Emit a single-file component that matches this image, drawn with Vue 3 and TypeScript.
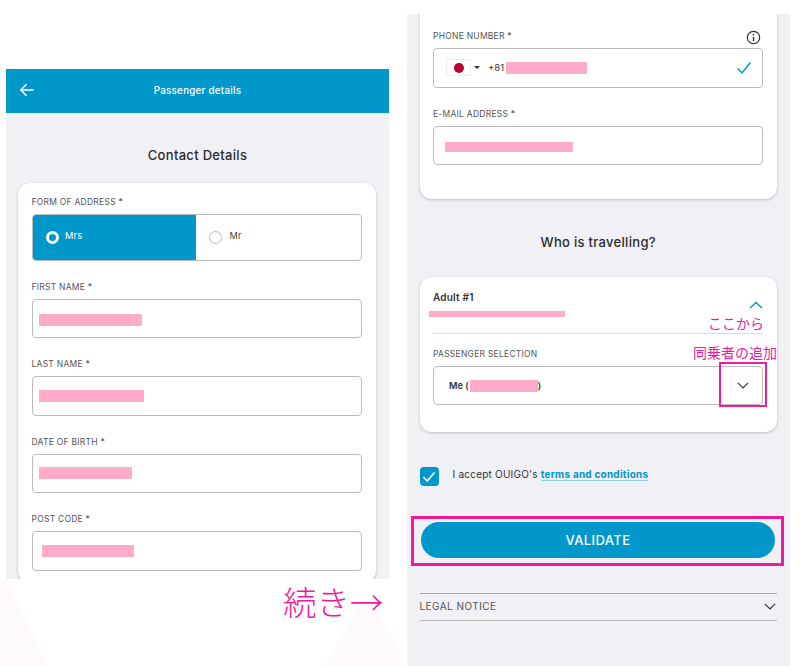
<script setup lang="ts">
const contactFields = [
  { label: 'FIRST NAME *', width: 103, inset: 6.5, shift: 3 },
  { label: 'LAST NAME *', width: 105, inset: 6.5, shift: 0 },
  { label: 'DATE OF BIRTH *', width: 92.5, inset: 6.5, shift: 0 },
  { label: 'POST CODE *', width: 92, inset: 9.5, shift: 1 },
]
</script>

<template>
  <div class="page">
    <svg class="decor" width="800" height="666" viewBox="0 0 800 666">
      <path d="M0 579L6 579L48 666L0 666Z" fill="#fefafb" />
      <path d="M325 666L362 600L372 600L400 652L400 666Z" fill="#fefafb" />
    </svg>

    <section class="panel left">
      <header class="topbar">
        <svg class="back" width="16" height="14" viewBox="0 0 16 14">
          <path d="M14.5 7H2M7.5 1.2L1.8 7L7.5 12.8" fill="none" stroke="#fff" stroke-width="1.5" />
        </svg>
        <span>Passenger details</span>
      </header>
      <h2 class="title contact">Contact Details</h2>
      <div class="card open">
        <div class="label">FORM OF ADDRESS *</div>
        <div class="radio-group">
          <div class="radio selected"><i class="dot on"></i><span>Mrs</span></div>
          <div class="radio"><i class="dot"></i><span>Mr</span></div>
        </div>
        <div v-for="f in contactFields" :key="f.label" class="field">
          <div class="label">{{ f.label }}</div>
          <div class="box" :style="{ paddingLeft: f.inset + 'px' }">
            <i class="mask" :style="{ width: f.width + 'px', marginTop: f.shift + 'px' }"></i>
          </div>
        </div>
      </div>
    </section>

    <section class="panel right">
      <div class="card tail">
        <div class="label-row">
          <div class="label">PHONE NUMBER *</div>
          <svg class="info" width="15" height="15" viewBox="0 0 15 15">
            <circle cx="7.5" cy="7.5" r="6.2" fill="none" stroke="#333" stroke-width="1.2" />
            <path d="M7.5 6.8V11" stroke="#333" stroke-width="1.4" />
            <circle cx="7.5" cy="4.6" r="0.9" fill="#333" />
          </svg>
        </div>
        <div class="box phone">
          <span class="flag"><i></i></span>
          <i class="caret"></i>
          <span class="code">+81</span>
          <i class="mask phone-mask"></i>
          <svg class="tick" width="16" height="14" viewBox="0 0 16 14">
            <path d="M1.5 7.5L6 12L14.5 1.5" fill="none" stroke="#0097cb" stroke-width="1.5" />
          </svg>
        </div>
        <div class="field">
          <div class="label">E-MAIL ADDRESS *</div>
          <div class="box email"><i class="mask email-mask"></i></div>
        </div>
      </div>

      <h2 class="title who">Who is travelling?</h2>

      <div class="card adult">
        <div class="adult-head">
          <strong>Adult #1</strong>
          <i class="mask adult-mask"></i>
          <svg class="chev-up" width="14" height="8" viewBox="0 0 14 8">
            <path d="M1 7L7 1.5L13 7" fill="none" stroke="#0097cb" stroke-width="1.5" />
          </svg>
        </div>
        <div class="label selection">PASSENGER SELECTION</div>
        <div class="box select">
          <span class="me">Me (</span><i class="mask me-mask"></i><span class="me">)</span>
          <svg class="chev" width="12" height="7" viewBox="0 0 14 8">
            <path d="M1 1L7 6.8L13 1" fill="none" stroke="#333" stroke-width="1.4" />
          </svg>
        </div>
      </div>

      <div class="accept">
        <span class="check">
          <svg width="14" height="12" viewBox="0 0 14 12">
            <path d="M1.5 6L5.2 10L12.5 1.5" fill="none" stroke="#fff" stroke-width="1.6" />
          </svg>
        </span>
        <p>I accept OUIGO's <a>terms and conditions</a></p>
      </div>

      <button class="validate">VALIDATE</button>

      <div class="legal">
        <span>LEGAL NOTICE</span>
        <svg width="12" height="7" viewBox="0 0 14 8">
          <path d="M1 1L7 6.8L13 1" fill="none" stroke="#333" stroke-width="1.4" />
        </svg>
      </div>
    </section>

    <div class="note more">続き→</div>
    <div class="note here">ここから</div>
    <div class="note add">同乗者の追加</div>
    <i class="frame frame-select"></i>
    <i class="frame frame-validate"></i>
  </div>
</template>

<style>
html, body { margin: 0; background: #fff; }
</style>

<style scoped>
.page {
  position: relative;
  width: 800px;
  height: 666px;
  overflow: hidden;
  display: flex;
  align-items: flex-start;
  background: #fff;
  font-family: Inter, "Liberation Sans", sans-serif;
  color: #333;
}
.decor { position: absolute; left: 0; top: 0; }
.panel {
  position: relative;
  width: 383px;
  background: #f0f0f5;
  overflow: hidden;
  box-sizing: border-box;
}
.left { margin: 69px 0 0 6px; height: 510px; }
.right { margin: 14px 0 0 18px; height: 652px; padding: 0 13px 0 12.5px; }
.topbar {
  position: relative;
  height: 44px;
  background: #0097cb;
  color: #fff;
  display: flex;
  align-items: center;
  justify-content: center;
  font-size: 9.8px;
  font-weight: 500;
  letter-spacing: .25px;
}
.topbar span { margin-top: -2px; }
.back { position: absolute; left: 13px; top: 14px; }
.title {
  margin: 0;
  text-align: center;
  font-size: 13px;
  line-height: 16px;
  font-weight: 500;
  letter-spacing: .3px;
  color: #2c2c2c;
}
.contact { padding: 34px 0 20px; }
.card {
  background: #fff;
  border-radius: 12px;
  box-shadow: 0 1px 3px rgba(0, 0, 0, .22);
  box-sizing: border-box;
}
.open {
  margin: 0 13px 0 12px;
  height: 400px;
  padding: 13px 14.5px 0 13.5px;
}
.label {
  font-size: 8.5px;
  line-height: 12px;
  letter-spacing: .25px;
  color: #555;
}
.radio-group {
  display: flex;
  height: 46.5px;
  margin-top: 6px;
  border-radius: 4px;
  border: 1px solid #bbb;
  box-sizing: border-box;
  overflow: hidden;
}
.radio {
  flex: 1;
  display: flex;
  align-items: center;
  gap: 8px;
  padding: 0 0 0 13px;
  box-sizing: border-box;
  font-size: 9.2px;
  color: #444;
  letter-spacing: .2px;
}
.radio span { margin-top: -3px; }
.radio.selected {
  flex: 0 0 163px;
  gap: 6.5px;
  background: #0097cb;
  color: #fff;
  padding-left: 13px;
}
.dot {
  width: 13px;
  height: 13px;
  border-radius: 50%;
  border: 1px solid #bbb;
  box-sizing: border-box;
  background: #fff;
  flex: none;
}
.dot.on { border: 3px solid #fff; background: #0097cb; }
.field { margin-top: 20px; }
.box {
  height: 39.5px;
  margin-top: 6px;
  border: 1px solid #bbb;
  border-radius: 4px;
  box-sizing: border-box;
  display: flex;
  align-items: center;
  background: #fff;
}
.mask { display: block; height: 12px; background: #ffabc9; flex: none; }
.tail {
  height: 197px;
  margin-top: -12px;
  padding: 28px 14px 0 13.5px;
}
.label-row {
  display: flex;
  justify-content: space-between;
  align-items: center;
  height: 12px;
}
.info { margin: 2px 2px 0 0; }
.phone { padding: 0 10px 0 12px; position: relative; }
.flag {
  width: 25px;
  height: 17px;
  border: 1px solid #ececec;
  border-radius: 2px;
  box-sizing: border-box;
  display: flex;
  align-items: center;
  justify-content: center;
}
.flag i { width: 10px; height: 10px; border-radius: 50%; background: #bc002d; }
.caret {
  margin-left: 2.5px;
  border-left: 3px solid transparent;
  border-right: 3px solid transparent;
  border-top: 3.5px solid #333;
}
.code { margin-left: 8.5px; font-size: 9.5px; color: #333; }
.phone-mask { width: 81px; margin-left: 2px; }
.tick { margin-left: auto; }
.email { padding-left: 11px; }
.email-mask { width: 128px; height: 10px; margin-top: 3px; }
.who { padding: 35px 0 27px; }
.adult {
  height: 155px;
  padding: 0 14px 0 13.5px;
}
.adult-head {
  position: relative;
  height: 56px;
  border-bottom: 1px solid #ddd;
  font-size: 10px;
  color: #333;
}
.adult-head strong { display: block; padding-top: 14px; line-height: 12px; font-weight: 600; letter-spacing: .2px; }
.adult-mask { position: absolute; left: -4px; top: 34px; width: 136px; height: 6px; }
.chev-up { position: absolute; right: 0; top: 24px; }
.selection { margin-top: 14px; }
.select { margin-top: 5.5px; padding: 0 13px 0 15px; }
.me { font-size: 9.2px; font-weight: 600; color: #333; }
.me-mask { width: 68px; margin: 1px 0 0 1px; }
.select .chev { margin-left: auto; }
.accept {
  display: flex;
  align-items: flex-start;
  gap: 14px;
  margin-top: 35px;
}
.check {
  width: 19px;
  height: 19px;
  border-radius: 4px;
  background: #0097cb;
  display: flex;
  align-items: center;
  justify-content: center;
  flex: none;
}
.accept p {
  margin: 0;
  font-size: 10px;
  line-height: 14px;
  color: #333;
  letter-spacing: .22px;
}
.accept a {
  color: #0097cb;
  font-weight: 700;
  border-bottom: 1.5px solid #8fd0e8;
}
.validate {
  display: block;
  width: 354px;
  height: 36px;
  margin: 36px 0 0 1.5px;
  border: 0;
  border-radius: 18px;
  background: #0097cb;
  color: #fff;
  font: 500 13px Inter, "Liberation Sans", sans-serif;
  letter-spacing: .4px;
}
.legal {
  margin-top: 35px;
  height: 26px;
  border-top: 1px solid #aaa;
  border-bottom: 1px solid #bbb;
  display: flex;
  align-items: center;
  justify-content: space-between;
  font-size: 10px;
  color: #555;
  letter-spacing: .45px;
  padding-right: 1px;
}
.legal span { margin-top: -3px; }
.legal svg { margin-top: -2px; }
.note {
  position: absolute;
  color: #f01b9a;
  font-family: "Noto Sans CJK JP", sans-serif;
  white-space: nowrap;
  line-height: 1;
}
.more { left: 283px; top: 584px; font-size: 33.5px; font-weight: 300; }
.here { left: 708px; top: 316px; font-size: 14px; }
.add { left: 693px; top: 345px; font-size: 14px; }
.frame { position: absolute; border: 2px solid #f01b9a; box-sizing: border-box; }
.frame-select { left: 719px; top: 362px; width: 48px; height: 45px; }
.frame-validate { left: 411px; top: 516px; width: 373px; height: 49.5px; border-width: 3px; }
</style>
